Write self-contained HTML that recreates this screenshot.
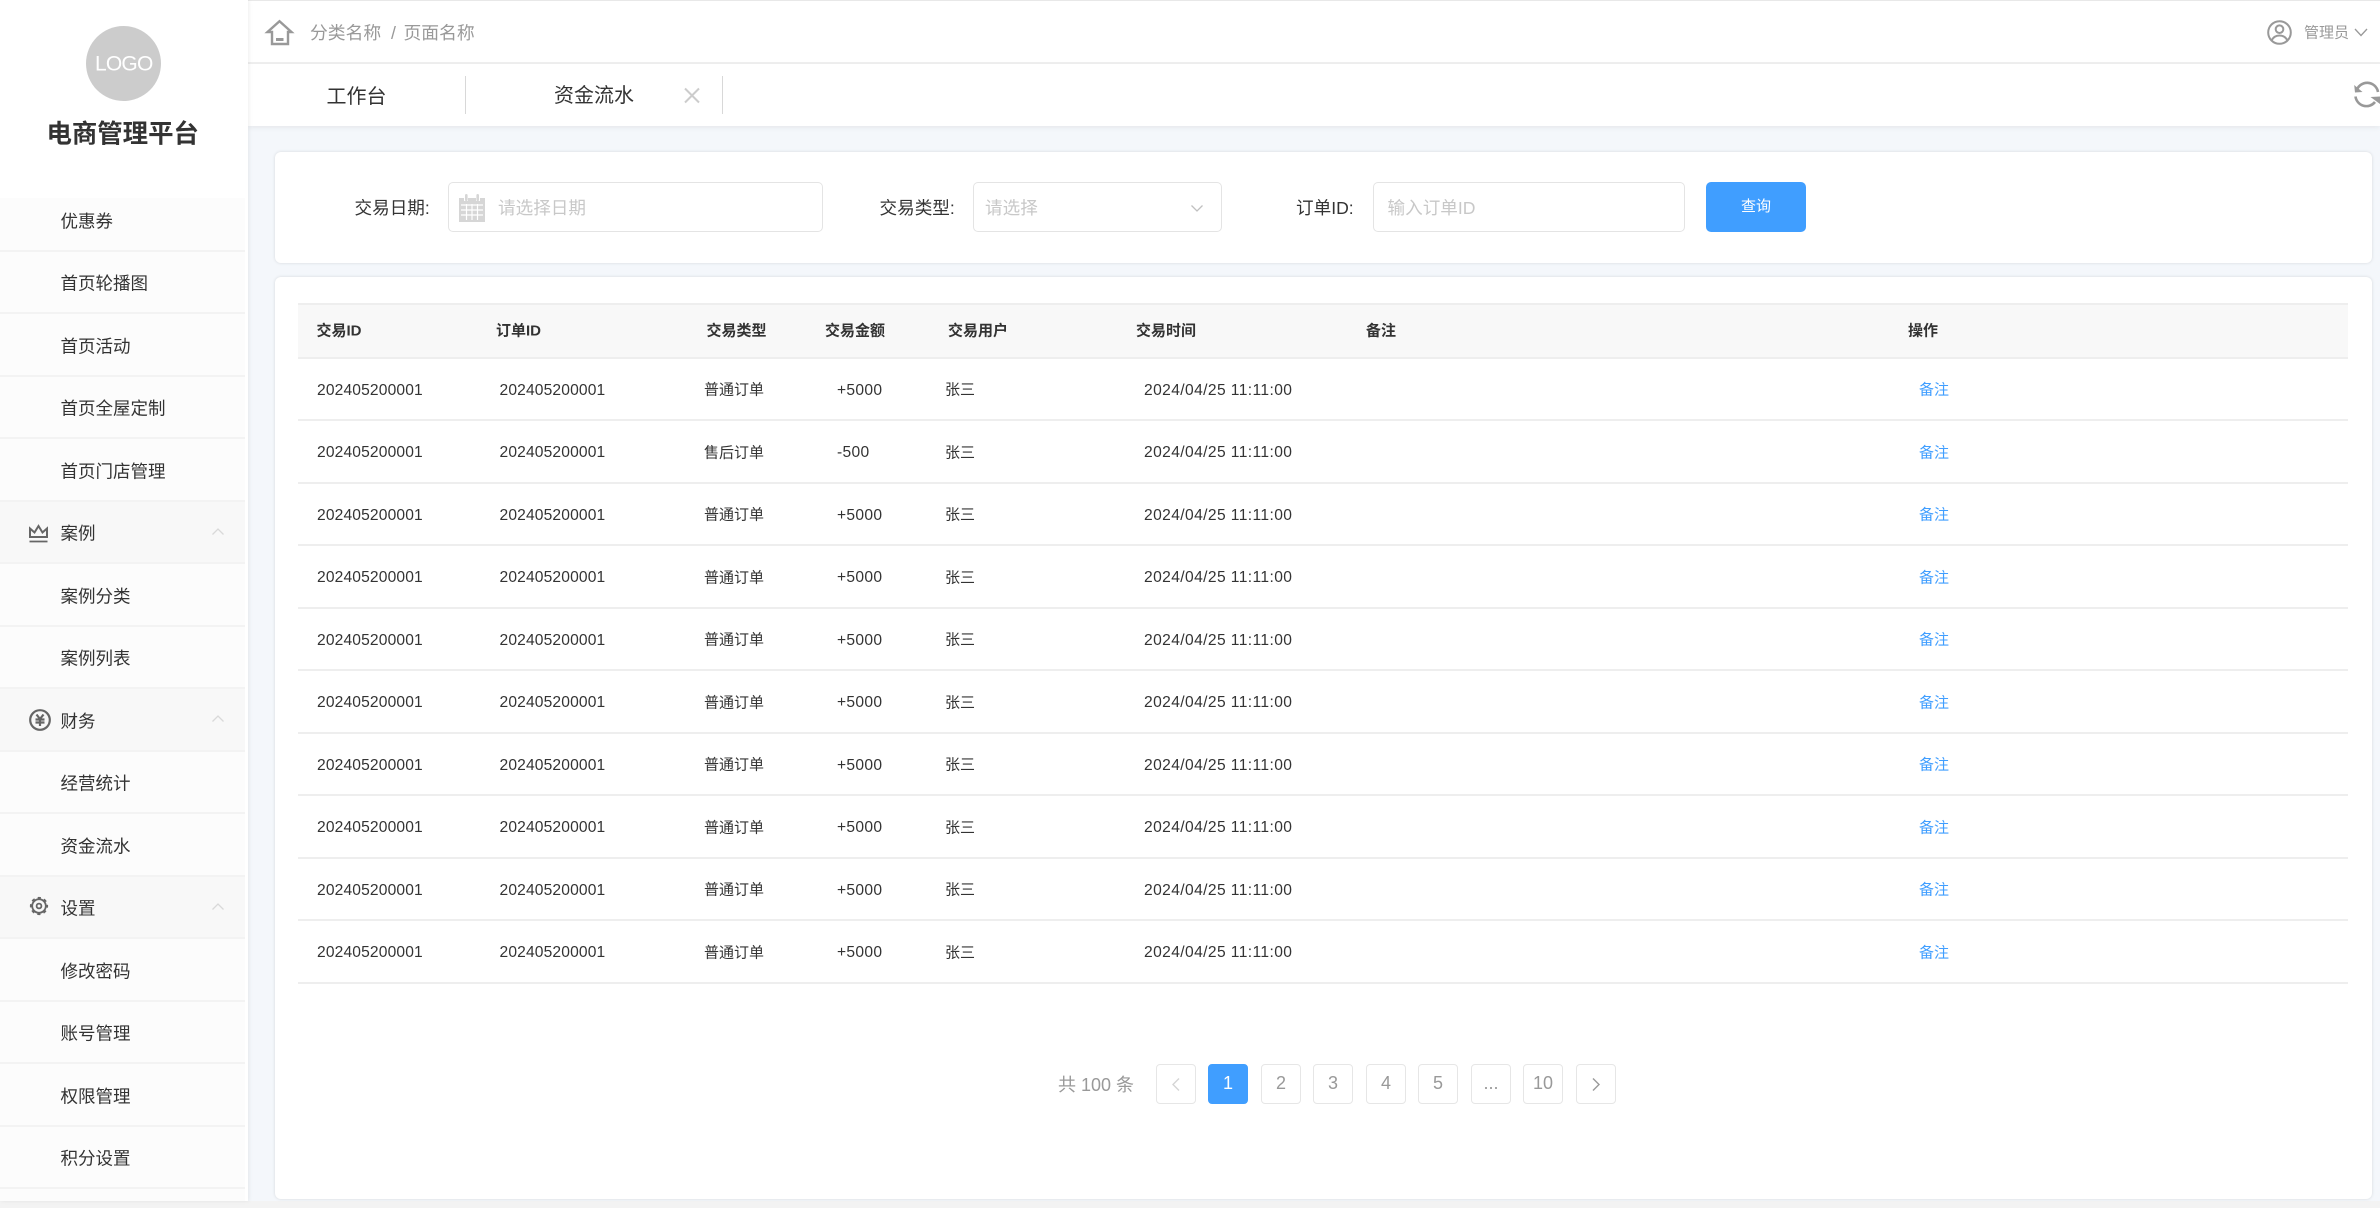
<!DOCTYPE html>
<html lang="zh-CN">
<head>
<meta charset="utf-8">
<title>资金流水</title>
<style>
*{box-sizing:border-box;margin:0;padding:0}
html,body{width:2380px;height:1208px;overflow:hidden;background:#f4f7fb}
body{position:relative;font-family:"Liberation Sans","Noto Sans CJK SC",sans-serif;color:#333}
.a{position:absolute}
.t{position:absolute;white-space:nowrap;line-height:1;transform:translateY(-50%)}
svg{position:absolute;display:block;overflow:visible}
#side{left:0;top:0;width:248px;height:1201px;background:#fff;box-shadow:1px 0 4px rgba(0,0,0,.07);overflow:hidden}
.m{position:absolute;left:0;width:245px;height:62.5px;background:#fcfcfc;border-bottom:2px solid #f3f3f3}
.m.g{background:#f8f8f8}
.m span{position:absolute;left:60.5px;top:32.5px;transform:translateY(-50%);font-size:17.5px;line-height:1;white-space:nowrap;color:#333}
.chev{left:212px;top:26px}
.card{position:absolute;left:274.5px;width:2097px;background:#fff;border-radius:6px;box-shadow:0 0 3px rgba(0,0,0,.13)}
.inp{position:absolute;top:182px;height:50px;background:#fff;border:1.5px solid #e4e4e4;border-radius:5px}
.ph{color:#c8c8c8;font-size:17.6px;top:208.5px}
.lb{font-size:17.6px;top:208.5px;color:#333}
.th{position:absolute;top:303px;left:298px;width:2050px;height:56px;background:#f8f8f8;border-top:2px solid #eeeeee;border-bottom:2px solid #eeeeee}
.h{position:absolute;top:331px;font-size:15px;font-weight:bold;line-height:1;white-space:nowrap;transform:translateY(-50%);color:#333}
.r{position:absolute;left:298px;width:2050px;height:62.5px;border-bottom:2px solid #eeeeee}
.r span{position:absolute;top:31.5px;transform:translateY(-50%);font-size:15px;line-height:1;white-space:nowrap;color:#333}
.r .d{font-size:15.6px;top:32px;letter-spacing:.15px}
.r .c1{left:19px}.r .c2{left:201.5px}.r .c3{left:406px}.r .c4{left:539px;letter-spacing:.3px}.r .c5{left:647px}.r .c6{left:846px;letter-spacing:.4px}
.r .c7{left:1621px;color:#409eff}
.p{position:absolute;top:1064px;width:40px;height:40px;border:1.5px solid #e6e6e6;border-radius:4px;background:#fff;color:#999;font-size:18px;line-height:37px;text-align:center}
.p.on{background:#409eff;border-color:#409eff;color:#fff}
</style>
</head>
<body>
<div class="a" style="left:0;top:0;width:2380px;height:1px;background:#e8e8e8"></div>
<div class="a" style="left:0;top:1201px;width:2380px;height:7px;background:#f3f3f3"></div>

<!-- header -->
<div class="a" style="left:248px;top:1px;width:2132px;height:63px;background:#fff;border-bottom:2px solid #efefef"></div>
<div class="a" style="left:248px;top:64px;width:2132px;height:62px;background:#fff;box-shadow:0 2px 5px rgba(0,0,0,.06)"></div>

<svg style="left:266px;top:20px" width="27" height="26" viewBox="0 0 27 26" fill="none" stroke="#999" stroke-width="2.4">
<path d="M1.5 12 13.5 1.2 25.5 12H22V24H6V12Z" stroke-linejoin="miter"/><path d="M10 19.500h7.500" stroke-width="3"/>
</svg>
<div class="t" style="left:310px;top:34px;font-size:17.8px;color:#999">分类名称</div>
<div class="t" style="left:391px;top:34px;font-size:17.8px;color:#999">/</div>
<div class="t" style="left:403.5px;top:34px;font-size:17.8px;color:#999">页面名称</div>

<svg style="left:2267px;top:20px" width="25" height="25" viewBox="0 0 25 25" fill="none" stroke="#999" stroke-width="2">
<circle cx="12.5" cy="12.5" r="11.3"/><circle cx="12.5" cy="9.2" r="3.8"/><path d="M4.6 20.5C6.5 16.5 9.5 15.5 12.5 15.5S18.5 16.5 20.4 20.5"/>
</svg>
<div class="t" style="left:2304px;top:33px;font-size:15px;color:#999">管理员</div>
<svg style="left:2354px;top:28px" width="14" height="9" viewBox="0 0 14 9" fill="none" stroke="#999" stroke-width="1.3"><path d="M1 1l6 6.5L13 1"/></svg>

<div class="t" style="left:326.5px;top:96.5px;font-size:20px;color:#333">工作台</div>
<div class="a" style="left:465px;top:76px;width:1px;height:38px;background:#d8d8d8"></div>
<div class="t" style="left:554px;top:96px;font-size:20px;color:#333">资金流水</div>
<svg style="left:684px;top:88px" width="16" height="15" viewBox="0 0 16 15" fill="none" stroke="#ccc" stroke-width="2"><path d="M1 .5l14 14M15 .5l-14 14"/></svg>
<div class="a" style="left:722px;top:76px;width:1px;height:38px;background:#d8d8d8"></div>

<svg style="left:2354px;top:82px" width="26" height="25" viewBox="0 0 26 25" fill="none" stroke="#999" stroke-width="2.6">
<path d="M2.500 9A11 11 0 0 1 24 10"/><path d="M1.500 14.500A11 11 0 0 0 21 20"/>
<path d="M.2 3 1 10.500 8.500 10Z" fill="#999" stroke="none"/><path d="M16.500 15 26 14.500 26 22Z" fill="#999" stroke="none"/>
</svg>

<!-- sidebar -->
<div id="side" class="a">
  <div class="a" style="left:86px;top:25.500px;width:75px;height:75px;border-radius:50%;background:#ccc"></div>
  <div class="t" style="left:95px;top:63.500px;font-size:21px;color:#fff;width:57px;text-align:center;letter-spacing:-.8px">LOGO</div>
  <div class="t" style="left:46.500px;top:134.500px;font-size:25.400px;font-weight:bold;color:#333">电商管理平台</div>

  <div class="a" style="left:0;top:198px;width:245px;height:1003px;background:#fcfcfc"></div>
  <div class="m" style="top:198px;height:53.500px"><span style="top:23.500px">优惠券</span></div>
  <div class="m" style="top:251.500px"><span>首页轮播图</span></div>
  <div class="m" style="top:314px"><span>首页活动</span></div>
  <div class="m" style="top:376.500px"><span>首页全屋定制</span></div>
  <div class="m" style="top:439px"><span>首页门店管理</span></div>
  <div class="m g" style="top:501.500px"><span>案例</span>
    <svg style="left:29px;top:22px" width="19" height="19" viewBox="0 0 19 19" fill="none" stroke="#666" stroke-width="2"><path d="M1 4.500v8.500h17V4.500L13.500 8.500 9.500 2 5.500 8.500Z"/><path d="M.5 17.500h18" stroke-width="1.800"/></svg>
    <svg class="chev" width="12" height="7" viewBox="0 0 12 7" fill="none" stroke="#d9d9d9" stroke-width="1.3"><path d="M.5 6.500 6 1l5.500 5.500"/></svg>
  </div>
  <div class="m" style="top:564px"><span>案例分类</span></div>
  <div class="m" style="top:626.500px"><span>案例列表</span></div>
  <div class="m g" style="top:689px"><span>财务</span>
    <svg style="left:29px;top:20px" width="22" height="22" viewBox="0 0 22 22" fill="none" stroke="#666"><circle cx="11" cy="11" r="9.800" stroke-width="2.200"/><path d="M7.500 5.500 11 10l3.500-4.500M6.500 10.500h9M6.500 13.500h9M11 10v7" stroke-width="2.200"/></svg>
    <svg class="chev" width="12" height="7" viewBox="0 0 12 7" fill="none" stroke="#d9d9d9" stroke-width="1.3"><path d="M.5 6.500 6 1l5.500 5.500"/></svg>
  </div>
  <div class="m" style="top:751.500px"><span>经营统计</span></div>
  <div class="m" style="top:814px"><span>资金流水</span></div>
  <div class="m g" style="top:876.500px"><span>设置</span>
    <svg style="left:30px;top:20.500px" width="18" height="18" viewBox="0 0 18 18" fill="none" stroke="#666"><circle cx="9" cy="9" r="6.800" stroke-width="1.800"/><circle cx="9" cy="9" r="8" stroke-width="2.200" stroke-dasharray="3.100 3.183" stroke-dashoffset="1.500"/><circle cx="9" cy="9" r="2.400" stroke-width="1.800"/></svg>
    <svg class="chev" width="12" height="7" viewBox="0 0 12 7" fill="none" stroke="#d9d9d9" stroke-width="1.3"><path d="M.5 6.500 6 1l5.500 5.500"/></svg>
  </div>
  <div class="m" style="top:939px"><span>修改密码</span></div>
  <div class="m" style="top:1001.500px"><span>账号管理</span></div>
  <div class="m" style="top:1064px"><span>权限管理</span></div>
  <div class="m" style="top:1126.500px"><span>积分设置</span></div>
</div>

<!-- search card -->
<div class="card" style="top:152px;height:111px"></div>
<div class="t lb" style="left:354.500px">交易日期:</div>
<div class="inp" style="left:448px;width:375px"></div>
<svg style="left:459px;top:194px" width="26" height="28" viewBox="0 0 26 28" fill="#d6d6d6">
<path d="M0 4h5v3h4V4h8v3h4V4h5v24H0Z"/><rect x="6" y="0" width="2.600" height="7" rx="1.300"/><rect x="17.400" y="0" width="2.600" height="7" rx="1.300"/>
<path d="M2 11h22M2 16h22M2 21h22M7.500 10v16M13 10v16M18.500 10v16" stroke="#fff" stroke-width="1.200"/>
</svg>
<div class="t ph" style="left:498px">请选择日期</div>

<div class="t lb" style="left:879.500px">交易类型:</div>
<div class="inp" style="left:973px;width:249px"></div>
<div class="t ph" style="left:985px">请选择</div>
<svg style="left:1191px;top:205px" width="12" height="7" viewBox="0 0 12 7" fill="none" stroke="#c0c0c0" stroke-width="1.300"><path d="M.5.500 6 6l5.500-5.500"/></svg>

<div class="t lb" style="left:1296px">订单ID:</div>
<div class="inp" style="left:1373px;width:312px"></div>
<div class="t ph" style="left:1387.500px">输入订单ID</div>

<div class="a" style="left:1706px;top:182px;width:100px;height:50px;background:#409eff;border-radius:5px;color:#fff;font-size:15px;line-height:50px;text-align:center">查询</div>

<!-- table card -->
<div class="card" style="top:277px;height:922px"></div>
<div class="th"></div>
<div class="h" style="left:316.500px">交易ID</div>
<div class="h" style="left:496px">订单ID</div>
<div class="h" style="left:706.500px">交易类型</div>
<div class="h" style="left:825px">交易金额</div>
<div class="h" style="left:948px">交易用户</div>
<div class="h" style="left:1136px">交易时间</div>
<div class="h" style="left:1366px">备注</div>
<div class="h" style="left:1908px">操作</div>

<div class="r" style="top:358.500px"><span class="c1 d">202405200001</span><span class="c2 d">202405200001</span><span class="c3">普通订单</span><span class="c4 d">+5000</span><span class="c5">张三</span><span class="c6 d">2024/04/25 11:11:00</span><span class="c7">备注</span></div>
<div class="r" style="top:421px"><span class="c1 d">202405200001</span><span class="c2 d">202405200001</span><span class="c3">售后订单</span><span class="c4 d">-500</span><span class="c5">张三</span><span class="c6 d">2024/04/25 11:11:00</span><span class="c7">备注</span></div>
<div class="r" style="top:483.500px"><span class="c1 d">202405200001</span><span class="c2 d">202405200001</span><span class="c3">普通订单</span><span class="c4 d">+5000</span><span class="c5">张三</span><span class="c6 d">2024/04/25 11:11:00</span><span class="c7">备注</span></div>
<div class="r" style="top:546px"><span class="c1 d">202405200001</span><span class="c2 d">202405200001</span><span class="c3">普通订单</span><span class="c4 d">+5000</span><span class="c5">张三</span><span class="c6 d">2024/04/25 11:11:00</span><span class="c7">备注</span></div>
<div class="r" style="top:608.500px"><span class="c1 d">202405200001</span><span class="c2 d">202405200001</span><span class="c3">普通订单</span><span class="c4 d">+5000</span><span class="c5">张三</span><span class="c6 d">2024/04/25 11:11:00</span><span class="c7">备注</span></div>
<div class="r" style="top:671px"><span class="c1 d">202405200001</span><span class="c2 d">202405200001</span><span class="c3">普通订单</span><span class="c4 d">+5000</span><span class="c5">张三</span><span class="c6 d">2024/04/25 11:11:00</span><span class="c7">备注</span></div>
<div class="r" style="top:733.500px"><span class="c1 d">202405200001</span><span class="c2 d">202405200001</span><span class="c3">普通订单</span><span class="c4 d">+5000</span><span class="c5">张三</span><span class="c6 d">2024/04/25 11:11:00</span><span class="c7">备注</span></div>
<div class="r" style="top:796px"><span class="c1 d">202405200001</span><span class="c2 d">202405200001</span><span class="c3">普通订单</span><span class="c4 d">+5000</span><span class="c5">张三</span><span class="c6 d">2024/04/25 11:11:00</span><span class="c7">备注</span></div>
<div class="r" style="top:858.500px"><span class="c1 d">202405200001</span><span class="c2 d">202405200001</span><span class="c3">普通订单</span><span class="c4 d">+5000</span><span class="c5">张三</span><span class="c6 d">2024/04/25 11:11:00</span><span class="c7">备注</span></div>
<div class="r" style="top:921px"><span class="c1 d">202405200001</span><span class="c2 d">202405200001</span><span class="c3">普通订单</span><span class="c4 d">+5000</span><span class="c5">张三</span><span class="c6 d">2024/04/25 11:11:00</span><span class="c7">备注</span></div>

<!-- pagination -->
<div class="t" style="left:1058px;top:1084.500px;font-size:18px;color:#999">共 100 条</div>
<div class="p" style="left:1156px"><svg style="left:14.500px;top:12.500px" width="8" height="13" viewBox="0 0 8 13" fill="none" stroke="#d4d4d4" stroke-width="1.400"><path d="M7 .5 1 6.500l6 6"/></svg></div>
<div class="p on" style="left:1208px">1</div>
<div class="p" style="left:1261px">2</div>
<div class="p" style="left:1313px">3</div>
<div class="p" style="left:1366px">4</div>
<div class="p" style="left:1418px">5</div>
<div class="p" style="left:1471px">...</div>
<div class="p" style="left:1523px">10</div>
<div class="p" style="left:1576px"><svg style="left:15px;top:12.500px" width="8" height="13" viewBox="0 0 8 13" fill="none" stroke="#999" stroke-width="1.400"><path d="M1 .5l6 6-6 6"/></svg></div>
</body>
</html>
